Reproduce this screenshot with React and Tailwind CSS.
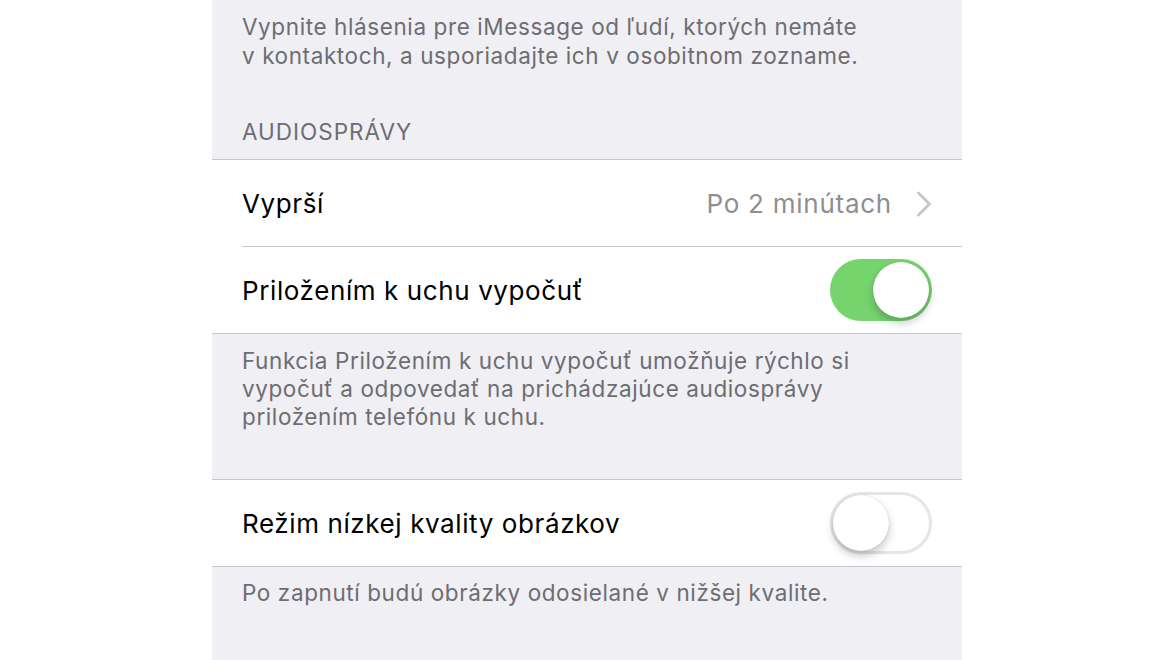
const font = { fontFamily: "Inter, 'Open Sans', sans-serif" };

const Toggle = ({ on }) => (
  <div
    className={`relative w-[102px] h-[62px] rounded-full ${
      on ? "bg-[#76d46d]" : "bg-white border-[3px] border-[#e6e6e6]"
    }`}
  >
    <div
      className={`absolute w-[56px] h-[56px] rounded-full bg-white shadow-[0_5px_8px_rgba(0,0,0,0.22),0_0_1px_rgba(0,0,0,0.25)] ${
        on ? "right-[3px] top-[3px]" : "left-[0px] top-[0px]"
      }`}
    />
  </div>
);

const Chevron = () => (
  <svg width="16" height="26" viewBox="0 0 16 26" fill="none">
    <polyline
      points="2.5,2 13.5,13 2.5,24"
      stroke="#c7c7cc"
      strokeWidth="3"
      strokeLinecap="round"
      strokeLinejoin="round"
    />
  </svg>
);

const Row = ({ label, children, inset }) => (
  <div
    className={`relative bg-white flex items-center pl-[30px] pr-[30px] ${
      inset ? "h-[87px]" : "h-[86px]"
    }`}
  >
    <span className="text-[26px] text-black tracking-[0.6px]">{label}</span>
    <div className="ml-auto flex items-center">{children}</div>
    {inset && (
      <div className="absolute bottom-0 left-[30px] right-0 h-px bg-[#c8c7cc]" />
    )}
  </div>
);

export default function App() {
  return (
    <div className="w-full h-[660px] bg-white flex justify-center overflow-hidden" style={font}>
      <div className="w-[750px] h-[660px] bg-[#efeff4] text-[#6d6d72]">
        <div className="pt-[12px] px-[30px] text-[22.5px] leading-[29px] tracking-[0.6px]">
          <p>Vypnite hlásenia pre iMessage od ľudí, ktorých nemáte</p>
          <p>v kontaktoch, a usporiadajte ich v osobitnom zozname.</p>
        </div>
        <div className="mt-[48px] pb-[13px] px-[30px] text-[22.5px] leading-[28px] tracking-[1px]">
          AUDIOSPRÁVY
        </div>
        <div className="border-t border-b border-[#c8c7cc]">
          <Row label="Vyprší" inset>
            <span className="text-[26px] text-[#8e8e93] tracking-[0.75px] mr-[24px]">Po 2 minútach</span>
            <Chevron />
          </Row>
          <Row label="Priložením k uchu vypočuť">
            <Toggle on />
          </Row>
        </div>
        <div className="pt-[13px] pb-[48px] px-[30px] text-[22.5px] leading-[28px] tracking-[0.6px]">
          <p>Funkcia Priložením k uchu vypočuť umožňuje rýchlo si</p>
          <p>vypočuť a odpovedať na prichádzajúce audiosprávy</p>
          <p>priložením telefónu k uchu.</p>
        </div>
        <div className="border-t border-b border-[#c8c7cc]">
          <Row label="Režim nízkej kvality obrázkov">
            <Toggle on={false} />
          </Row>
        </div>
        <div className="pt-[12px] px-[30px] text-[22.5px] leading-[28px] tracking-[0.6px]">
          <p>Po zapnutí budú obrázky odosielané v nižšej kvalite.</p>
        </div>
      </div>
    </div>
  );
}
